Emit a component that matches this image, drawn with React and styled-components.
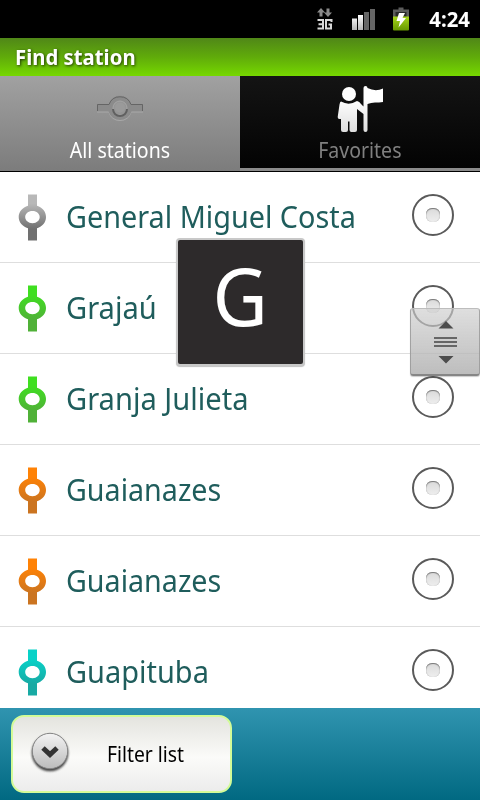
import styled, { createGlobalStyle } from "styled-components";

const GlobalStyle = createGlobalStyle`
  * {
    box-sizing: border-box;
  }

  body {
    margin: 0;
    background: #000;
    font-family: "Noto Sans", "Open Sans", sans-serif;
  }
`;

const Screen = styled.div`
  position: relative;
  display: flex;
  flex-direction: column;
  width: 480px;
  height: 800px;
  overflow: hidden;
  background: #fff;
`;

const StatusBar = styled.header`
  display: flex;
  align-items: center;
  justify-content: flex-end;
  height: 38px;
  flex: none;
  padding-right: 10px;
  background: #000;
`;

const StatusIcons = styled.svg`
  display: block;
  width: 100px;
  height: 38px;
  margin-right: 12px;
`;

/* condenses the font a little, the box keeps its natural width */
const Label = styled.span`
  display: block;
  white-space: nowrap;
  transform: scaleX(${({ $scale }) => $scale || 1});
  transform-origin: ${({ $origin }) => $origin || "left"} center;
`;

const Clock = styled(Label)`
  color: #fff;
  font-size: 21px;
  font-weight: 700;
  line-height: 38px;
`;

const TitleBar = styled.h1`
  height: 38px;
  flex: none;
  margin: 0;
  padding-left: 15px;
  background: linear-gradient(#508718, #60ab0a 50%, #76d800);
  color: #fff;
  font-size: 21px;
  font-weight: 700;
  line-height: 38px;
  text-shadow: 1px 1px 3px rgba(0, 0, 0, 0.7);
`;

const Tabs = styled.nav`
  display: grid;
  grid-template-columns: 240px 240px;
  height: 96px;
  flex: none;
  border-bottom: 1px solid #000;
  background: #8b8b8b;
`;

const Tab = styled.div`
  display: flex;
  flex-direction: column;
  align-items: center;
  height: ${({ $active }) => ($active ? "95px" : "92px")};
  background: ${({ $active }) =>
    $active ? "linear-gradient(#a1a1a1, #7c7c7c)" : "linear-gradient(#141414, #030303)"};
  color: ${({ $active }) => ($active ? "#fff" : "#808080")};
  font-size: 21px;
  line-height: 28px;
`;

const TabIcon = styled.svg`
  display: block;
  width: 64px;
  height: 60px;
  flex: none;
`;

const List = styled.ul`
  flex: 1;
  min-height: 0;
  margin: 0;
  padding: 0;
  overflow: hidden;
  list-style: none;
`;

const Row = styled.li`
  display: flex;
  align-items: center;
  height: 91px;
  padding: 0 26px 0 18px;
  border-bottom: 1px solid #dedede;
`;

const LineIcon = styled.svg`
  display: block;
  width: 29px;
  height: 47px;
  flex: none;
  margin-right: 19px;
`;

const StationName = styled.div`
  flex: 1;
  min-width: 0;
  color: #1f5d5c;
  font-size: 30px;
  line-height: 40px;
`;

const Radio = styled.span`
  display: grid;
  place-items: center;
  width: 42px;
  height: 42px;
  flex: none;
  margin-bottom: 4px;
  border: 2px solid #5a5a5a;
  border-radius: 50%;
  background: #fff;

  &::after {
    content: "";
    width: 14px;
    height: 14px;
    border-radius: 6px;
    background: linear-gradient(#dadada, #eee);
    box-shadow: inset 0 1px 1px #777, inset 0 0 1px #bbb;
  }
`;

const SectionPopup = styled.div`
  position: absolute;
  top: 238px;
  left: 176px;
  display: flex;
  justify-content: center;
  width: 129px;
  height: 128px;
  border: 2px solid #c8c8c8;
  border-radius: 4px;
  background: #2d2a2b;
  box-shadow: 0 1px 1px rgba(0, 0, 0, 0.25);
  color: #fff;
  font-size: 80px;
  line-height: 109px;
`;

const ScrollThumb = styled.div`
  position: absolute;
  top: 308px;
  right: 0;
  width: 70px;
  height: 68px;
  border: 1px solid rgba(150, 150, 150, 0.8);
  border-top-color: rgba(190, 190, 190, 0.8);
  border-bottom: 2px solid rgba(125, 125, 125, 0.9);
  border-radius: 3px;
  background: linear-gradient(rgba(205, 205, 205, 0.65), rgba(175, 175, 175, 0.82));
  box-shadow: 0 1px 1px rgba(0, 0, 0, 0.2);

  svg {
    display: block;
  }
`;

const Footer = styled.footer`
  height: 92px;
  flex: none;
  padding: 7px 11px;
  background: linear-gradient(#3094b0, #016982);
`;

const FilterButton = styled.button`
  display: flex;
  align-items: center;
  width: 221px;
  height: 78px;
  padding: 0 0 0 16px;
  border: 2px solid #d3fb98;
  border-radius: 13px;
  background: linear-gradient(#e4e4df, #fbfbf9 55%, #ececec);
  color: #000;
  font: 21px "Noto Sans", "Open Sans", sans-serif;

  svg {
    flex: none;
    margin: 0 36px 4px 0;
  }
`;

const LINES = {
  silver: ["#b8b8b8", "#707070"],
  green: ["#3fdf20", "#50b138"],
  orange: ["#ff8205", "#cb7420"],
  teal: ["#08d2c8", "#18aaa4"],
};

const STATIONS = [
  { name: "General Miguel Costa", line: "silver", scale: 0.96 },
  { name: "Grajaú", line: "green", scale: 0.97 },
  { name: "Granja Julieta", line: "green", scale: 0.97 },
  { name: "Guaianazes", line: "orange" },
  { name: "Guaianazes", line: "orange" },
  { name: "Guapituba", line: "teal", scale: 0.965 },
];

function StatusGlyphs() {
  return (
    <StatusIcons viewBox="0 0 100 38">
      <defs>
        <linearGradient id="signal" x1="0" y1="0" x2="0" y2="1">
          <stop offset="0" stopColor="#fff" />
          <stop offset="1" stopColor="#b5b5b5" />
        </linearGradient>
        <linearGradient id="battery" x1="0" y1="0" x2="0" y2="1">
          <stop offset="0" stopColor="#a6d51b" />
          <stop offset="1" stopColor="#689800" />
        </linearGradient>
      </defs>
      <path d="M5 8l4 4.500h-2.500v4h-3v-4h-2.500zM12 17l-4-4.500h2.500v-4h3v4h2.500z" fill="#8a8a8a" />
      {/* 3G */}
      <path d="M1.500 20h5.500v8.500h-5.500M2.500 24.200h4.500M15.500 22v-2h-5.500v8.500h5v-4h-2.500" fill="none" stroke="#d8d8d8" strokeWidth="2" />
      <path d="M36 18.500h5v11.500h-5zM42 15h5v15h-5z" fill="url(#signal)" />
      <path d="M48 12h5v18h-5zM54 9h5v21h-5z" fill="#656565" />
      <path d="M82.500 7.500h5v2h5.500v8h-16v-8h5.500z" fill="#5c5c5c" />
      <path d="M79.500 12h11v5h-11z" fill="#292929" />
      <path d="M77 16.500h16v13q0 1-1 1h-14q-1 0-1-1z" fill="url(#battery)" />
      <path d="M83 13h6l-2.500 5h3.500l-7.500 9.500 1.500-6.500h-3.500z" fill="#fff" />
    </StatusIcons>
  );
}

function StationMark({ line }) {
  const [from, to] = LINES[line];
  return (
    <LineIcon viewBox="0 0 29 47">
      <defs>
        <linearGradient id={`line-${line}`} x1="0" y1="0" x2="0" y2="1">
          <stop offset="0.2" stopColor={from} />
          <stop offset="0.75" stopColor={to} />
        </linearGradient>
      </defs>
      <path
        d="M10 .5h9v11.300c5.500 1.700 9 6 9 11.200s-3.500 9.500-9 11.200v12.300h-9v-12.300c-5.500-1.700-9.300-6-9.300-11.200s3.800-9.500 9.300-11.200zM14.500 17c-4.300 0-7.300 2.700-7.300 6s3 6.200 7.300 6.200 7.200-2.900 7.200-6.200-3-6-7.200-6z"
        fillRule="evenodd"
        fill={`url(#line-${line})`}
      />
    </LineIcon>
  );
}

function AllStationsIcon() {
  return (
    <TabIcon viewBox="0 0 64 60">
      <g fill="none">
        <path d="M9 28h11.500a12 12 0 0 1 23 0h11.500v8.500h-11.500a12 12 0 0 1-23 0h-11.500z" fill="#a9a9a9" />
        <path d="M9 28h11.500a12 12 0 0 1 23 0h11.500v7.500h-11.500a12 12 0 0 1-23 0h-11.500z" fill="#8b8b8b" />
        <path d="M9.500 35v-6.500h11.500a11.700 11.700 0 0 1 22 0h11.500v6.500" stroke="#656565" />
        <circle cx="32" cy="32" r="7" fill="#959595" stroke="#a5a5a5" />
        <path d="M25 33a7 7 0 0 0 14 0" stroke="#606060" strokeWidth="2" />
        <circle cx="32" cy="31.500" r="5" fill="#9a9a9a" />
      </g>
    </TabIcon>
  );
}

function FavoritesIcon() {
  return (
    <TabIcon viewBox="0 0 64 60">
      <defs>
        <linearGradient id="person" x1="0" y1="0" x2="0" y2="1">
          <stop offset="0.3" stopColor="#fff" />
          <stop offset="1" stopColor="#dedede" />
        </linearGradient>
      </defs>
      <circle cx="21" cy="18" r="7" fill="#fff" />
      <path
        d="M13 25.500q8 4.500 16-.5 2.500.5 4 3l2.500 2.500V12q0-2 2-2t2 2q8 4 15.500.5V26q-4 .5-8 .500t-7.500 1.500V54q0 2-2 2t-2-2V38l-6.500-5v21q0 2-2 2h-3.500q-2 0-2-2V45.500h-1.500v8.500q0 2-2 2h-3q-2 0-2-2V43h-1.500q-2 0-1.800-2l1.800-12.500q.500-3 1.500-3z"
        fill="url(#person)"
      />
    </TabIcon>
  );
}

function App() {
  return (
    <Screen>
      <GlobalStyle />
      <StatusBar>
        <StatusGlyphs />
        <Clock $scale={0.97} $origin="right">4:24</Clock>
      </StatusBar>
      <TitleBar>
        <Label $scale={0.968}>Find station</Label>
      </TitleBar>
      <Tabs>
        <Tab $active>
          <AllStationsIcon />
          <Label $scale={0.93} $origin="center">All stations</Label>
        </Tab>
        <Tab>
          <FavoritesIcon />
          <Label $scale={0.93} $origin="center">Favorites</Label>
        </Tab>
      </Tabs>
      <List>
        {STATIONS.map((station, i) => (
          <Row key={i}>
            <StationMark line={station.line} />
            <StationName>
              <Label $scale={station.scale || 0.955}>{station.name}</Label>
            </StationName>
            <Radio />
          </Row>
        ))}
      </List>
      <Footer>
        <FilterButton>
          <svg width="42" height="44" viewBox="0 0 42 44">
            <defs>
              <linearGradient id="knob" x1="0" y1="0" x2="0" y2="1">
                <stop offset="0" stopColor="#f3f3f3" />
                <stop offset="1" stopColor="#bcbcbc" />
              </linearGradient>
              <filter id="soft" x="-20%" y="-20%" width="140%" height="140%">
                <feGaussianBlur stdDeviation="1" />
              </filter>
            </defs>
            <circle cx="21" cy="23" r="18.300" fill="#444" filter="url(#soft)" />
            <circle cx="21" cy="21" r="17.700" fill="url(#knob)" stroke="#858585" />
            <path d="M14 18l7 6.500 7-6.500" fill="none" stroke="#333" strokeWidth="5" />
          </svg>
          <Label $scale={0.92}>Filter list</Label>
        </FilterButton>
      </Footer>
      <SectionPopup>
        <Label $scale={0.95} $origin="center">G</Label>
      </SectionPopup>
      <ScrollThumb>
        <svg width="68" height="65" viewBox="0 0 68 65">
          <path d="M27.500 19.500l7.500-7.500 7.500 7.500zM27.500 47h15l-7.500 7.500z" fill="#4d4d4d" />
          <path d="M23 29h23M23 33h23M23 37h23" stroke="#666" strokeWidth="2" />
        </svg>
      </ScrollThumb>
    </Screen>
  );
}

export default App;
